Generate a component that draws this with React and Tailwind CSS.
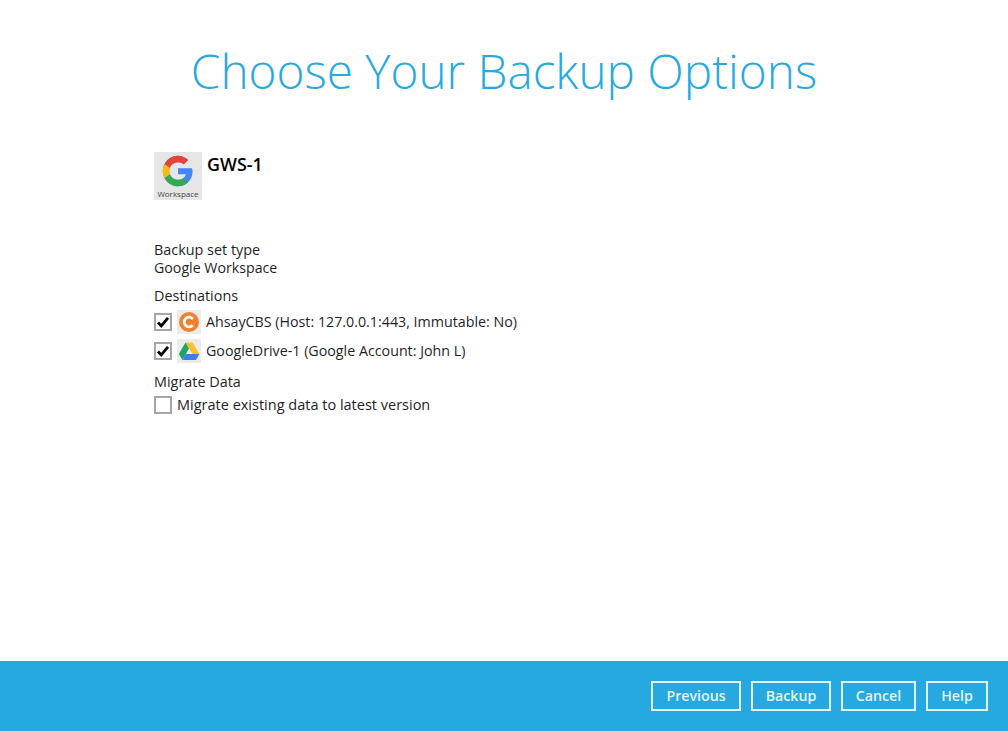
import React from "react";

const font = { fontFamily: '"Open Sans", sans-serif' };

function Check({ checked }) {
  return (
    <div className="w-[18px] h-[18px] border-2 border-[#a6a6a6] bg-white shrink-0 flex items-center justify-center">
      {checked && (
        <svg width="14" height="14" viewBox="0 0 14 14">
          <path d="M2 7.5 L5.3 11 L12 2.8" fill="none" stroke="#000" strokeWidth="2.8" />
        </svg>
      )}
    </div>
  );
}

function AhsayIcon() {
  return (
    <div className="w-[24px] h-[24px] bg-[#ececec] flex items-center justify-center shrink-0">
      <svg width="20" height="20" viewBox="0 0 20 20">
        <circle cx="10" cy="10" r="10" fill="#f0802d" />
        <path d="M13.8 7 A4.8 4.800 0 1 0 13.8 13" fill="none" stroke="#fff" strokeWidth="2.8" />
      </svg>
    </div>
  );
}

function DriveIcon() {
  return (
    <div className="w-[24px] h-[24px] bg-[#ececec] flex items-center justify-center shrink-0">
      <svg width="22" height="19" viewBox="0 0 22 19">
        <path d="M7.5 0.5 H14.5 L21.5 12 H14.5 Z" fill="#fbc02d" />
        <path d="M7.5 0.5 L11 6.5 L4.5 18 L0.8 12 Z" fill="#1fa463" />
        <path d="M7.800 12 H21.5 L18 18 H4.5 Z" fill="#3d7fe8" />
      </svg>
    </div>
  );
}

function GoogleIcon() {
  return (
    <div className="w-[48px] h-[48px] bg-[#e6e6e6] flex flex-col items-center shrink-0">
      <svg width="34" height="34" viewBox="0 0 48 48" className="mt-[2px]">
        <path d="M43.6 20H24v8.5h11.3C33.7 33.4 29.3 36.5 24 36.5c-6.9 0-12.5-5.6-12.5-12.5S17.1 11.5 24 11.5c3.1 0 6 1.1 8.2 3l6.1-6.1C34.4 4.8 29.500 2.500 24 2.500 12.100 2.500 2.500 12.100 2.500 24S12.100 45.500 24 45.500c10.800 0 20.600-7.800 20.600-21.500 0-1.400-.4-2.700-1-4z" fill="#4285f4" />
        <path d="M5 14.500 12.100 19.700C14 15 18.600 11.500 24 11.500c3.100 0 6 1.100 8.200 3l6.100-6.100C34.400 4.800 29.500 2.500 24 2.500 15.800 2.500 8.700 7.200 5 14.500z" fill="#ea4335" />
        <path d="M24 45.500c5.400 0 10.300-1.900 14-5.300l-6.700-5.500c-2 1.400-4.500 1.800-7.300 1.800-5.300 0-9.700-3.400-11.400-8L5.100 33.800C8.700 40.900 15.800 45.500 24 45.500z" fill="#34a853" />
        <path d="M5 14.500C3.400 17.300 2.500 20.600 2.500 24s.9 6.800 2.600 9.800l7.500-5.300c-.7-1.400-1.100-2.900-1.100-4.500s.4-3.200 1.100-4.300z" fill="#fbbc05" />
      </svg>
      <span className="text-[8px] leading-[11px] text-[#444]">Workspace</span>
    </div>
  );
}

function Btn({ w, children }) {
  return (
    <button className="h-[30px] border-2 border-[#e4f4fb] text-[#e4f4fb] text-[14.2px] font-semibold flex items-center justify-center pb-[1px]" style={{ width: w }}>
      {children}
    </button>
  );
}

export default function App() {
  return (
    <div className="w-[1008px] h-[731px] bg-white flex flex-col overflow-hidden" style={font}>
      <div className="flex-1 flex flex-col">
        <h1 className="text-center text-[#29a9e1] text-[47.7px] leading-[64px] font-light pt-[39px] h-[103px] box-content">
          Choose Your Backup Options
        </h1>
        <div className="pl-[154px] pt-[10px] text-[14.4px] text-[#1f1f1f]">
          <div className="flex">
            <GoogleIcon />
            <div className="ml-[5px] text-[17.9px] leading-[24px] font-semibold text-black">GWS-1</div>
          </div>
          <div className="mt-[41px] leading-[18px]">Backup set type</div>
          <div className="leading-[18px] text-[14.2px]">Google Workspace</div>
          <div className="mt-[10px] leading-[18px]">Destinations</div>
          <div className="mt-[4px] flex items-center h-[26px] text-[14.25px]">
            <Check checked />
            <div className="ml-[5px]"><AhsayIcon /></div>
            <span className="ml-[5px]">AhsayCBS (Host: 127.0.0.1:443, Immutable: No)</span>
          </div>
          <div className="mt-[3px] flex items-center h-[26px] text-[14.25px]">
            <Check checked />
            <div className="ml-[5px]"><DriveIcon /></div>
            <span className="ml-[5px]">GoogleDrive-1 (Google Account: John L)</span>
          </div>
          <div className="mt-[9px] leading-[18px]">Migrate Data</div>
          <div className="mt-[5px] flex items-center h-[18px] text-[14.5px]">
            <Check />
            <span className="ml-[5px]">Migrate existing data to latest version</span>
          </div>
        </div>
      </div>
      <div className="h-[70px] bg-[#25a9e0] flex items-center justify-end gap-[10px] pr-[20px]">
        <Btn w={90}>Previous</Btn>
        <Btn w={80}>Backup</Btn>
        <Btn w={75}>Cancel</Btn>
        <Btn w={62}>Help</Btn>
      </div>
    </div>
  );
}
